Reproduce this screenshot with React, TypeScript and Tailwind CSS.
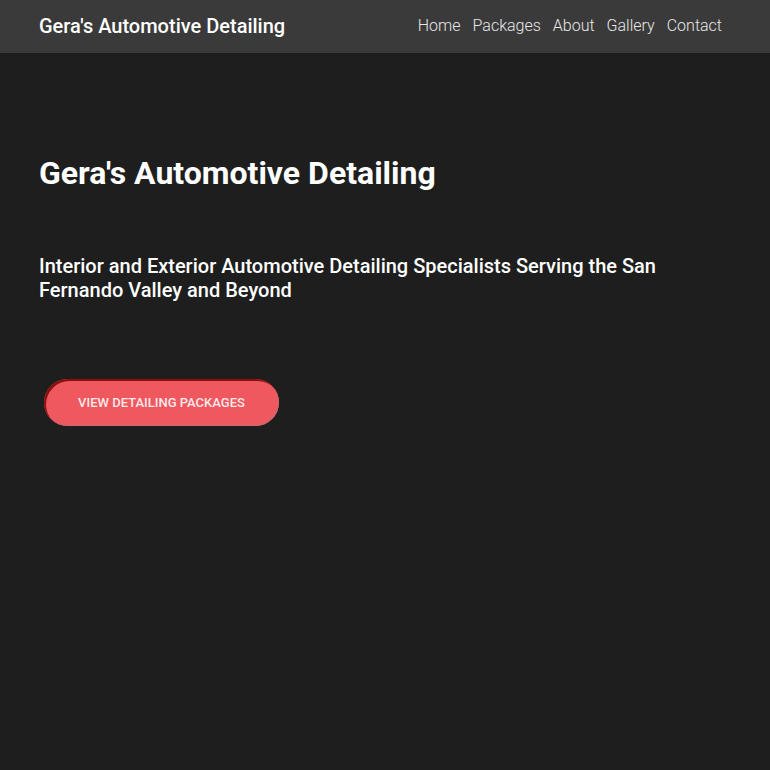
export default function App() {
  const links = ['Home', 'Packages', 'About', 'Gallery', 'Contact'];

  return (
    <div className="min-h-[770px] bg-[#1e1e1e] font-['Roboto',sans-serif] text-white">
      {/* Top bar */}
      <header className="flex h-[53px] items-center justify-between bg-[#3a3a3a] pb-[2px] pl-[39px] pr-[48px]">
        <a href="#" className="text-[20px] font-medium leading-none text-white">
          Gera's Automotive Detailing
        </a>
        <nav className="flex items-center gap-[12px]">
          {links.map((l) => (
            <a key={l} href="#" className="text-[16px] font-light leading-none text-[#e8e8e8]">
              {l}
            </a>
          ))}
        </nav>
      </header>

      {/* Hero */}
      <section className="px-[39px] pt-[101px]">
        <h1 className="text-[32px] font-bold leading-[38px]">Gera's Automotive Detailing</h1>
        <p className="mt-[62px] max-w-[640px] text-[20px] font-medium leading-[24px]">
          Interior and Exterior Automotive Detailing Specialists Serving the San Fernando Valley and Beyond
        </p>
        <button
          type="button"
          className="ml-[5px] mt-[77px] flex h-[47px] w-[235px] items-center justify-center rounded-full bg-[#ef585e] text-[13px] font-medium uppercase text-[#fbe9ea] shadow-[inset_2px_2px_0_#8a1010,inset_-1px_-1px_0_#c96a70]"
        >
          View Detailing Packages
        </button>
      </section>
    </div>
  );
}
